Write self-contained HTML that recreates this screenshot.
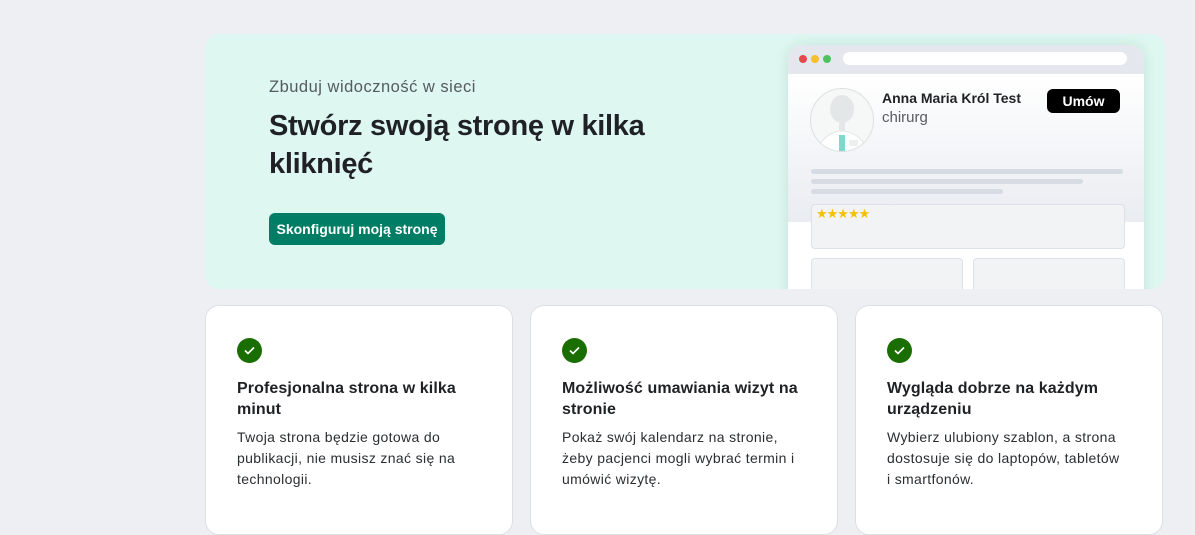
<!DOCTYPE html>
<html><head><meta charset="utf-8"><style>
*{box-sizing:border-box;margin:0;padding:0}
body{width:1195px;height:515px;overflow:hidden;background:#eeeff2;font-family:"Liberation Sans",sans-serif;position:relative;color:#1f2124}
.hero{position:absolute;left:205px;top:34px;width:960px;height:255px;background:#def7f0;border-radius:14px;overflow:hidden}
.sub{position:absolute;left:64px;top:44px;font-size:16.5px;color:#555b5f;letter-spacing:0.5px}
h1{position:absolute;left:64px;top:73px;font-size:29px;line-height:38px;font-weight:bold;color:#1f2124;width:420px;letter-spacing:-0.3px}
.btn{position:absolute;left:64px;top:179px;width:176px;height:32px;background:#007d65;color:#fff;border-radius:6px;font-size:14px;font-weight:bold;text-align:center;line-height:32px}
.br{position:absolute;left:583px;top:11px;width:356px;height:260px;background:#fff;border-radius:14px 14px 0 0;overflow:hidden;box-shadow:0 0 12px rgba(0,80,60,.12)}
.bar{height:29px;background:#e4e7ee;position:relative}
.dot{position:absolute;top:10px;width:8px;height:8px;border-radius:50%}
.url{position:absolute;left:55px;top:7px;width:284px;height:13px;background:#fff;border-radius:7px}
.grad{position:absolute;top:29px;left:0;right:0;height:148px;background:linear-gradient(#fff,#e9ecf1)}
.av{position:absolute;left:22px;top:43px;width:64px;height:64px;border-radius:50%;background:#f6f7f7;border:1px solid #dde1e3;overflow:hidden}
.ln{position:absolute;left:23px;height:5px;background:#d6dbe4;border-radius:3px}
.box{position:absolute;background:#f2f3f5;border:1px solid #dde1ea;border-radius:4px}
.card{position:absolute;top:305px;width:308px;height:230px;background:#fff;border:1px solid #dcdfe4;border-radius:14px}
.ck{position:absolute;left:31px;top:32px;width:25px;height:25px;border-radius:50%;background:#1a6e00}
.ct{position:absolute;left:31px;top:72px;width:250px;font-size:16px;line-height:21px;font-weight:bold;color:#1f2124;letter-spacing:0.1px}
.cd{position:absolute;left:31px;top:121px;width:240px;font-size:14px;line-height:21px;color:#2b2e31;letter-spacing:0.35px}
</style></head><body>
<div class="hero">
<div class="sub">Zbuduj widoczność w sieci</div>
<h1>Stwórz swoją stronę w kilka kliknięć</h1>
<div class="btn">Skonfiguruj moją stronę</div>
<div class="br">
<div class="bar"><div class="dot" style="left:11px;background:#e5484d"></div><div class="dot" style="left:23px;background:#f5c02c"></div><div class="dot" style="left:35px;background:#4cc35c"></div><div class="url"></div></div>
<div class="grad"></div>
<div class="av"><svg width="64" height="64" viewBox="0 0 64 64"><ellipse cx="31" cy="20" rx="12" ry="14" fill="#e3e7e7"/><rect x="28" y="30" width="6" height="18" fill="#e3e7e7"/><path d="M6 64 Q10 46 28 42 L34 42 Q52 46 58 64Z" fill="#fff" stroke="#e3e7e7"/><rect x="28" y="46" width="6" height="18" fill="#7fd8cc"/><rect x="38" y="51" width="9" height="6" fill="#eef0f0"/></svg></div>
<div style="position:absolute;left:94px;top:45px;font-size:14px;font-weight:bold">Anna Maria Król Test</div>
<div style="position:absolute;left:94px;top:64px;font-size:15px;color:#555b5f">chirurg</div>
<div style="position:absolute;left:259px;top:44px;width:73px;height:24px;background:#000;color:#fff;border-radius:6px;text-align:center;line-height:24px;font-size:14px;font-weight:bold">Umów</div>
<div class="ln" style="top:124px;width:312px"></div>
<div class="ln" style="top:134px;width:272px"></div>
<div class="ln" style="top:144px;width:192px"></div>
<div class="box" style="left:23px;top:159px;width:314px;height:45px"><div style="position:absolute;left:4px;top:1px;color:#f5c000;font-size:13px;letter-spacing:-1px">★★★★★</div></div>
<div class="box" style="left:23px;top:213px;width:152px;height:60px"></div>
<div class="box" style="left:185px;top:213px;width:152px;height:60px"></div>
</div>
</div>
<div class="card" style="left:205px"><div class="ck"><svg width="25" height="25"><path d="M8 12.5l3 3 6-6" stroke="#fff" stroke-width="1.6" fill="none"/></svg></div><div class="ct">Profesjonalna strona w kilka minut</div><div class="cd">Twoja strona będzie gotowa do publikacji, nie musisz znać się na technologii.</div></div>
<div class="card" style="left:530px"><div class="ck"><svg width="25" height="25"><path d="M8 12.5l3 3 6-6" stroke="#fff" stroke-width="1.6" fill="none"/></svg></div><div class="ct">Możliwość umawiania wizyt na stronie</div><div class="cd">Pokaż swój kalendarz na stronie, żeby pacjenci mogli wybrać termin i umówić wizytę.</div></div>
<div class="card" style="left:855px"><div class="ck"><svg width="25" height="25"><path d="M8 12.5l3 3 6-6" stroke="#fff" stroke-width="1.6" fill="none"/></svg></div><div class="ct">Wygląda dobrze na każdym urządzeniu</div><div class="cd">Wybierz ulubiony szablon, a strona dostosuje się do laptopów, tabletów i smartfonów.</div></div>
</body></html>
